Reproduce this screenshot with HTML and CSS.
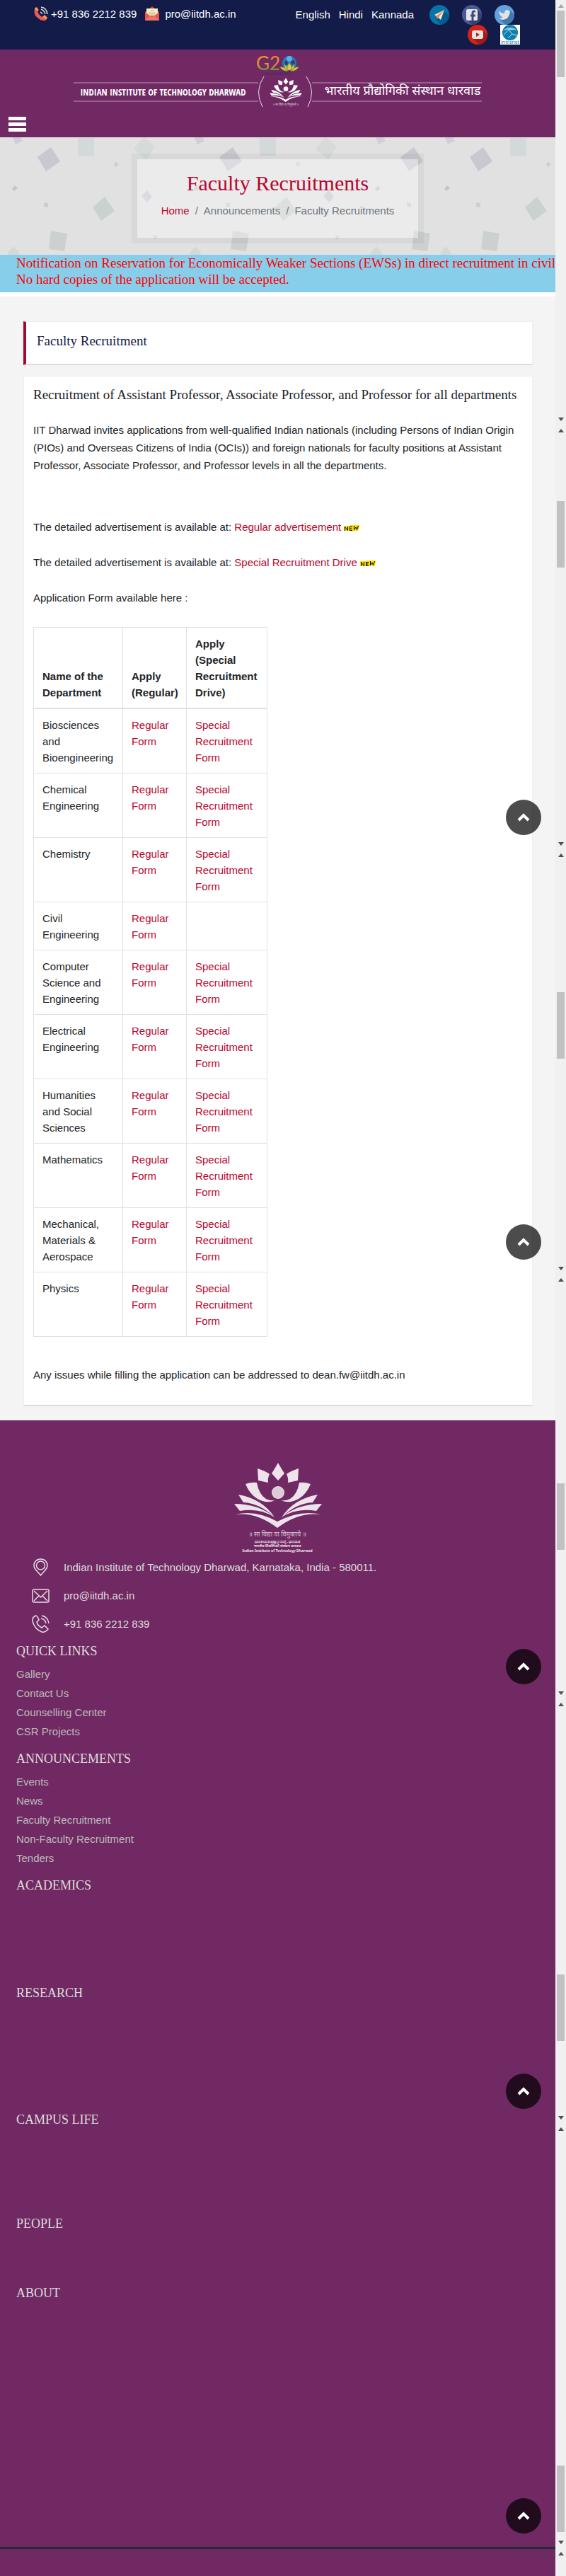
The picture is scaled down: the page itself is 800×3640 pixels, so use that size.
FILE: index.html
```html
<!DOCTYPE html>
<html lang="en">
<head>
<meta charset="utf-8">
<meta name="viewport" content="width=device-width, initial-scale=1">
<title>Faculty Recruitments | IIT Dharwad</title>
<link rel="stylesheet" href="styles.css">
</head>
<body>
<svg class="defs" aria-hidden="true">
  <defs>
    <symbol id="lotus" viewBox="0 0 124 92">
      <path d="M62 0Q67 9 71 15L62 25L53 15Q57 9 62 0Z"/>
      <path d="M33 8Q43 11 50 16Q47 22 48 28L34 25Z"/>
      <path d="M91 8Q81 11 74 16Q77 22 76 28L90 25Z"/>
      <path d="M16 30Q24 27 32 28Q35 45 45 51Q51 54 58 53Q49 57 40 54Q24 49 16 30Z"/>
      <path d="M108 30Q100 27 92 28Q89 45 79 51Q73 54 66 53Q75 57 84 54Q100 49 108 30Z"/>
      <path d="M6 45Q40 51 57 77Q36 57 13 56Z"/>
      <path d="M118 45Q84 51 67 77Q88 57 111 56Z"/>
      <path d="M0 58Q35 58 57 77Q36 63 8 68Z"/>
      <path d="M124 58Q89 58 67 77Q88 63 116 68Z"/>
      <path d="M2 73Q30 66 61 83Q94 66 122 73Q91 69 61 92Q31 69 2 73Z"/>
      <circle cx="62" cy="42" r="9"/>
    </symbol>
    <symbol id="chevron" viewBox="0 0 18 12"><path d="M2 10L9 3L16 10" fill="none" stroke="#fff" stroke-width="4"/></symbol>
    <symbol id="new" viewBox="0 0 22 9">
      <path d="M0 1H9V0H22V3L20 8H0Z" fill="#fd0"/>
      <path d="M1.500 8V2.500L5.500 7.500V2M12 2.500H8.500V7.500H12M8.500 5H11.500M14.500 1V6.500L17 3L18.500 6.500L20.500 1" fill="none" stroke="#000" stroke-width="1"/>
    </symbol>
  </defs>
</svg>
<div class="page">
  <div class="site">
    <div class="topbar">
      <div class="contact">
        <svg width="20" height="20" viewBox="0 0 20 20" aria-hidden="true">
          <path d="M1 3Q-1 12 5 16Q10 21 16 20L19 17L15 13L12 15Q7 13 5 7L7 5L4 1Z" fill="#e9595a"/>
          <path d="M1 3L3 1L6 5L5 7Z M12 15L15 12L19 16L17 18Z" fill="#f5a34c"/>
          <path d="M9 8Q11 9 12 11M10 4Q15 6 16 11M10 1Q18 2 19 11" fill="none" stroke="#d7dbe0" stroke-width="1.5"/>
        </svg>
        <span>+91 836 2212 839</span>
        <svg class="mail" width="20" height="20" viewBox="0 0 20 20" aria-hidden="true">
          <path d="M0 8L10 0L20 8V20H0Z" fill="#c9484b"/><path d="M2 3H18V13H2Z" fill="#f2ecc0"/>
          <path d="M0 8L8 14L0 20Z M20 8L12 14L20 20Z" fill="#e7564f"/><path d="M0 20L7 13Q10 16 13 13L20 20Z" fill="#ef7466"/>
          <path d="M8 6H12M5 9H15M6 11H14" stroke="#c9b98c"/>
        </svg>
        <span>pro@iitdh.ac.in</span>
      </div>
      <nav class="langs" aria-label="Language"><a href="#">English</a><a href="#">Hindi</a><a href="#">Kannada</a></nav>
      <div class="social">
        <div class="social-row first">
          <a href="#" aria-label="Telegram"><svg viewBox="0 0 28 28"><circle cx="14" cy="14" r="14" fill="#0674a6"/><path d="M20 8L28 15A14 14 0 0 1 16 28L9 20Z" fill="#045c8e"/><path d="M21 7L7 14L11 16L16 21Z" fill="#e9edf0"/><path d="M21 7L9 16L12 20L14 16Z" fill="#f08a3c"/></svg></a>
          <a href="#" aria-label="Facebook"><svg viewBox="0 0 28 28"><circle cx="14" cy="14" r="14" fill="#4c5a94"/><path d="M22 7L28 13A14 14 0 0 1 15 28L7 21Z" fill="#36416f"/><rect x="6" y="6" width="16" height="16" rx="2" fill="#e6e6e8"/><path d="M15 22V11Q15 9 17 9H19M12 15H19" fill="none" stroke="#3c4a80" stroke-width="3"/></svg></a>
          <a href="#" aria-label="Twitter"><svg viewBox="0 0 28 28"><circle cx="14" cy="14" r="14" fill="#64a1dc"/><path d="M22 8L28 14A14 14 0 0 1 15 28L7 20Z" fill="#3f7bab"/><path d="M6 8Q9 12 14 12Q14 7 18 7L22 9Q21 20 12 21Q9 21 6 19Q10 19 11 17Q8 16 8 14Q6 12 6 8Z" fill="#e3e3e5"/></svg></a>
        </div>
        <div class="social-row">
          <a href="#" aria-label="YouTube"><svg viewBox="0 0 28 28"><circle cx="14" cy="14" r="14" fill="#d42319"/><path d="M22 9L28 15A14 14 0 0 1 17 28L7 19Z" fill="#a51713"/><rect x="6" y="8" width="16" height="12" rx="3" fill="#e3e3e3"/><path d="M12 11L17 14L12 17Z" fill="#b5201c"/></svg></a>
          <a href="#" aria-label="Intranet"><svg viewBox="0 0 28 28"><path d="M0 0H28V28H0Z" fill="#fff"/><circle cx="14" cy="11" r="11" fill="#0e7fb0"/><path d="M4 8Q14 0 24 8Q14 5 4 8Z" fill="#8cc8e2"/><path d="M5 14L12 7L17 13L24 15M12 7L20 6M17 13L11 19" fill="none" stroke="#bfe0ee"/><text x="14" y="27" text-anchor="middle" class="intranet">Intranet</text></svg></a>
        </div>
      </div>
    </div>

    <header class="header">
      <svg class="g20" viewBox="0 0 60 30" role="img" aria-label="G20">
        <defs><linearGradient id="tri" x1="0" y1="0" x2="0" y2="1"><stop offset="0.3" stop-color="#f58a2c"/><stop offset="0.65" stop-color="#c99a35"/><stop offset="0.9" stop-color="#2c8a45"/></linearGradient></defs>
        <text x="-1" y="21" class="g20-text" fill="url(#tri)">G2</text>
        <circle cx="46" cy="11" r="10" fill="#1583c2"/><circle cx="46" cy="5" r="4" fill="#57b4e0"/>
        <path d="M39 9L43 7L44 13L40 14ZM48 8L53 7L54 12L49 14Z" fill="#54306a"/>
        <path d="M46 11Q50 15 49 21H43Q42 15 46 11ZM39 13Q43 16 44 22Q39 21 39 13ZM53 13Q49 16 48 22Q53 21 53 13ZM33 17Q38 16 44 22Q37 23 33 17ZM59 17Q54 16 48 22Q55 23 59 17Z" fill="#e6c542" stroke="#6d9b3a" stroke-width=".6"/>
        <text x="31" y="28" text-anchor="middle" class="g20-sub">भारत 2023 INDIA</text>
      </svg>
      <div class="brand">
        <span class="brand-en">INDIAN INSTITUTE OF TECHNOLOGY DHARWAD</span>
        <svg class="brand-mark" viewBox="0 0 76 43" role="img" aria-label="IIT Dharwad emblem">
          <path d="M8 0Q-6 21 6 43M68 0Q82 21 70 43" fill="none" stroke="#eadfe8"/>
          <use href="#lotus" x="16" y="1" width="46" height="36" fill="#fff"/>
          <text x="39" y="41" text-anchor="middle" class="motto-small">॥ सा विद्या या विमुक्तये ॥</text>
        </svg>
        <span class="brand-hi" lang="hi">भारतीय प्रौद्योगिकी संस्थान धारवाड</span>
      </div>
      <button class="menu" type="button" aria-label="Menu"><i></i><i></i><i></i></button>
    </header>

    <section class="banner">
      <svg class="confetti" aria-hidden="true">
        <defs>
          <g id="bits">
            <path d="M18 0H29L32 5L22 10Z" fill="#cfcfd8"/><path d="M110 1H133V26H110Z" fill="#d3d8d8"/>
            <path d="M203 -1L219 13L207 32L189 17Z" fill="#d6dad8"/><path d="M72 14L85 34L65 48L53 28Z" fill="#c8c9cf"/>
            <path d="M163 34L168 38L164 42L161 39Z" fill="#cdcdd8"/><path d="M21 68L25 72L20 76L17 73Z" fill="#c5c6c9"/>
            <path d="M62 92L68 93V99L62 98Z" fill="#cbcecd"/><path d="M148 84L162 104L143 118L131 99Z" fill="#cad2cf"/>
            <path d="M208 75L215 84L208 92L200 83Z" fill="#c6c7d2"/><path d="M72 132L95 136L91 161L69 158Z" fill="#ccd0ce"/>
            <path d="M19 154L27 163L26 166H12L11 163Z" fill="#d3d9d8"/><path d="M219 138L223 141L219 144L216 141Z" fill="#cfcfd2"/>
          </g>
          <pattern id="confetti" width="611" height="166" patternUnits="userSpaceOnUse"><use href="#bits"/><use href="#bits" x="257"/><use href="#bits" x="513"/></pattern>
        </defs>
        <rect width="100%" height="100%" fill="url(#confetti)"/>
      </svg>
      <div class="banner-box">
        <h1>Faculty Recruitments</h1>
        <nav class="crumbs" aria-label="Breadcrumb"><a href="#">Home</a><span>/</span><span>Announcements</span><span>/</span><span>Faculty Recruitments</span></nav>
      </div>
    </section>

    <div class="notice">
      <p>Notification on Reservation for Economically Weaker Sections (EWSs) in direct recruitment in civil posts</p>
      <p>No hard copies of the application will be accepted.</p>
    </div>

    <main class="content">
      <div class="card card-title"><h2>Faculty Recruitment</h2></div>
      <div class="card card-body">
        <h3>Recruitment of Assistant Professor, Associate Professor, and Professor for all departments</h3>
        <p class="intro">IIT Dharwad invites applications from well-qualified Indian nationals (including Persons of Indian Origin (PIOs) and Overseas Citizens of India (OCIs)) and foreign nationals for faculty positions at Assistant Professor, Associate Professor, and Professor levels in all the departments.</p>
        <p>The detailed advertisement is available at: <a href="#">Regular advertisement</a><svg class="new" role="img" aria-label="New"><use href="#new"/></svg></p>
        <p>The detailed advertisement is available at: <a href="#">Special Recruitment Drive</a><svg class="new" role="img" aria-label="New"><use href="#new"/></svg></p>
        <p>Application Form available here :</p>
        <table>
          <colgroup><col class="c-name"><col class="c-reg"><col class="c-spec"></colgroup>
          <thead><tr><th>Name of the Department</th><th>Apply (Regular)</th><th>Apply (Special Recruitment Drive)</th></tr></thead>
          <tbody>
            <tr><td>Biosciences and Bioengineering</td><td><a href="#">Regular Form</a></td><td><a href="#">Special Recruitment Form</a></td></tr>
            <tr><td>Chemical Engineering</td><td><a href="#">Regular Form</a></td><td><a href="#">Special Recruitment Form</a></td></tr>
            <tr><td>Chemistry</td><td><a href="#">Regular Form</a></td><td><a href="#">Special Recruitment Form</a></td></tr>
            <tr><td>Civil Engineering</td><td><a href="#">Regular Form</a></td><td></td></tr>
            <tr><td>Computer Science and Engineering</td><td><a href="#">Regular Form</a></td><td><a href="#">Special Recruitment Form</a></td></tr>
            <tr><td>Electrical Engineering</td><td><a href="#">Regular Form</a></td><td><a href="#">Special Recruitment Form</a></td></tr>
            <tr><td>Humanities and Social Sciences</td><td><a href="#">Regular Form</a></td><td><a href="#">Special Recruitment Form</a></td></tr>
            <tr><td>Mathematics</td><td><a href="#">Regular Form</a></td><td><a href="#">Special Recruitment Form</a></td></tr>
            <tr><td>Mechanical, Materials &amp; Aerospace</td><td><a href="#">Regular Form</a></td><td><a href="#">Special Recruitment Form</a></td></tr>
            <tr><td>Physics</td><td><a href="#">Regular Form</a></td><td><a href="#">Special Recruitment Form</a></td></tr>
          </tbody>
        </table>
        <p class="issues">Any issues while filling the application can be addressed to dean.fw@iitdh.ac.in</p>
      </div>
    </main>

    <footer class="footer">
      <svg class="footer-logo" viewBox="0 0 126 130" role="img" aria-label="Indian Institute of Technology Dharwad">
        <use href="#lotus" x="1" y="0" width="124" height="92" fill="#ede3eb"/>
        <circle cx="63" cy="42" r="8" fill="#dccbd9"/>
        <text x="62" y="104" text-anchor="middle" class="motto">॥ सा विद्या या विमुक्तये ॥</text>
        <text x="62" y="113" text-anchor="middle" class="name-small">ಭಾರತೀಯ ತಂತ್ರಜ್ಞಾನ ಸಂಸ್ಥೆ, ಧಾರವಾಡ</text>
        <text x="62" y="119" text-anchor="middle" class="name-small">भारतीय प्रौद्योगिकी संस्थान धारवाड</text>
        <text x="62" y="126" text-anchor="middle" class="name-small">Indian Institute of Technology Dharwad</text>
      </svg>
      <ul class="reach">
        <li><svg viewBox="0 0 25 25" aria-hidden="true"><path d="M12.500 1C6 1 3 6 3 10C3 16 9 19 12.500 24C16 19 22 16 22 10C22 6 19 1 12.500 1Z"/><circle cx="12.500" cy="10" r="6"/></svg><span>Indian Institute of Technology Dharwad, Karnataka, India - 580011.</span></li>
        <li><svg viewBox="0 0 25 25" aria-hidden="true"><rect x="1" y="4" width="23" height="18" rx="2"/><path d="M3 6L12.500 15L22 6M3 20L10 13M22 20L15 13"/></svg><span>pro@iitdh.ac.in</span></li>
        <li><svg viewBox="0 0 25 25" aria-hidden="true"><path d="M5 1Q0 4 1 9Q4 20 14 24Q19 25 23 20L18 15L14 18Q8 15 7 10L10 7Q8 1 5 1ZM13 5Q19 6 20 12M14 1Q23 3 24 12"/></svg><span>+91 836 2212 839</span></li>
      </ul>
      <section class="group"><h4>QUICK LINKS</h4><ul><li><a href="#">Gallery</a></li><li><a href="#">Contact Us</a></li><li><a href="#">Counselling Center</a></li><li><a href="#">CSR Projects</a></li></ul></section>
      <section class="group"><h4>ANNOUNCEMENTS</h4><ul><li><a href="#">Events</a></li><li><a href="#">News</a></li><li><a href="#">Faculty Recruitment</a></li><li><a href="#">Non-Faculty Recruitment</a></li><li><a href="#">Tenders</a></li></ul></section>
      <section class="group academics"><h4>ACADEMICS</h4></section>
      <section class="group research"><h4>RESEARCH</h4></section>
      <section class="group campus"><h4>CAMPUS LIFE</h4></section>
      <section class="group people"><h4>PEOPLE</h4></section>
      <section class="group about"><h4>ABOUT</h4></section>
      <div class="footer-end"></div>
    </footer>
  </div>

  <aside class="rail">
    <div class="tile top"><i class="up"></i><b class="thumb t0"></b><i class="down"></i></div>
    <div class="tile"><i class="up"></i><b class="thumb t1"></b><i class="down"></i><button class="to-top" type="button" aria-label="Back to top"><svg width="18" height="12"><use href="#chevron"/></svg></button></div>
    <div class="tile"><i class="up"></i><b class="thumb t2"></b><i class="down"></i><button class="to-top" type="button" aria-label="Back to top"><svg width="18" height="12"><use href="#chevron"/></svg></button></div>
    <div class="tile"><i class="up"></i><b class="thumb t3"></b><i class="down"></i><button class="to-top" type="button" aria-label="Back to top"><svg width="18" height="12"><use href="#chevron"/></svg></button></div>
    <div class="tile"><i class="up"></i><b class="thumb t4"></b><i class="down"></i><button class="to-top" type="button" aria-label="Back to top"><svg width="18" height="12"><use href="#chevron"/></svg></button></div>
    <div class="tile"><i class="up"></i><b class="thumb t5"></b><i class="down"></i><button class="to-top" type="button" aria-label="Back to top"><svg width="18" height="12"><use href="#chevron"/></svg></button></div>
    <div class="tile rest"><i class="up"></i></div>
  </aside>
</div>
</body>
</html>
```
FILE: styles.css
```css
* { box-sizing: border-box; }
body { margin: 0; background: #fff; color: #212529; font: 15px/25px "Liberation Sans", Arial, sans-serif; }
h1, h2, h3, h4, p, ul { margin: 0; padding: 0; font-weight: 400; }
h1, h2, h3, h4 { font-family: "Liberation Serif", "Times New Roman", serif; }
ul { list-style: none; }
a { color: #b8062e; text-decoration: none; }
button { border: 0; padding: 0; }
svg { display: block; }
.defs { position: absolute; width: 0; height: 0; }
.page { display: flex; }
.site { flex: 1; min-width: 0; }

.topbar { display: flex; min-height: 70px; background: #131b49; color: #fff; }
.contact { display: flex; align-items: center; gap: 4px; height: 24px; margin: 7px 0 0 48px; }
.contact .mail { margin: 0 4px 0 8px; }
.langs { display: flex; gap: 12px; margin: 8px 0 0 auto; }
.langs a { color: #fff; }
.social { display: flex; flex-direction: column; align-items: flex-end; padding: 7px 50px 0 22px; }
.social-row { display: flex; gap: 18px; }
.social-row.first { padding-right: 8px; }
.social-row svg { width: 28px; height: 28px; }
.intranet { font: 7px "Open Sans", sans-serif; fill: #16789f; }

.header { display: flex; flex-direction: column; padding: 8px 0; background: #712963; }
.g20 { width: 60px; height: 30px; align-self: center; overflow: visible; }
.g20-text { font: 26px Lato, sans-serif; }
.g20-sub { font: 5px "Noto Sans", sans-serif; fill: #39267a; }
.brand { display: flex; align-items: center; align-self: center; height: 43px; color: #fff; }
.brand-en, .brand-hi { display: flex; align-items: center; justify-content: center; height: 28px; border: solid #94608a; border-width: 2px 0; white-space: nowrap; }
.brand-en { width: 261px; padding-right: 8px; font: bold 13px "Liberation Sans Narrow", "Open Sans Condensed", "Liberation Sans", sans-serif; }
.brand-hi { width: 240px; padding-left: 16px; font: 18px "Noto Sans Devanagari", "Noto Sans", sans-serif; }
.brand-mark { width: 76px; height: 43px; }
.motto-small { font: 4px "Noto Sans", sans-serif; fill: #e0d2dd; }
.menu { display: flex; flex-direction: column; gap: 3px; width: 25px; margin: 14px 0 0 12px; background: none; }
.menu i { height: 5px; background: #fff; }

.banner { position: relative; display: flex; justify-content: center; padding: 23px 0 16px; background: #e1e1e1; }
.confetti { position: absolute; inset: 0; width: 100%; height: 100%; }
.banner-box { position: relative; padding: 16px 34px 26px; border: 8px solid rgba(0, 0, 0, .04); background: rgba(255, 255, 255, .35); background-clip: padding-box; text-align: center; }
.banner-box h1 { margin-bottom: 8px; color: #b8062e; font-size: 30px; line-height: 36px; }
.crumbs { display: flex; justify-content: center; gap: 8px; color: #6c757d; }

.notice { overflow: hidden; padding: 0 0 7px 23px; border-bottom: 6px solid #fff; background: #87ceeb; color: #f00; font: 19px/23px "Liberation Serif", "Times New Roman", serif; white-space: nowrap; }

.content { padding: 35px 32px 20px 33px; background: #f4f4f4; }
.card { border: 1px solid #eee; border-bottom: 2px solid #dcdcdc; background: #fff; }
.card-title { margin-bottom: 15px; padding: 15px 15px 21px; border-left: 4px solid #a3092c; color: #131b49; }
.card h2, .card h3 { font-size: 19px; line-height: 23px; }
.card-body { padding: 14px 14px 30px 13px; }
.card h3 { margin-bottom: 26px; }
.card p { margin-bottom: 25px; }
.card .intro { margin-bottom: 62px; }
.card .issues { margin-bottom: 0; }
.new { display: inline-block; width: 22px; height: 9px; margin-left: 4px; vertical-align: -1px; }
table { margin: 29px 0 41px; border-collapse: collapse; table-layout: fixed; width: 330px; line-height: 23px; }
.c-name { width: 126px; }
.c-reg { width: 90px; }
.c-spec { width: 114px; }
th, td { padding: 11px 10px 10px 12px; border: 1px solid #dee2e6; text-align: left; vertical-align: top; }
th { border-bottom-width: 2px; vertical-align: bottom; }

.footer { padding-top: 60px; background: #712963; color: #ddd; }
.footer-logo { width: 126px; height: 130px; margin: 0 auto; }
.motto { font: 9px "Noto Sans Devanagari", "Noto Sans", sans-serif; fill: #d5c2d1; }
.name-small { font: bold 5px "Noto Sans", sans-serif; fill: #ede3eb; }
.reach { padding: 5px 45px 0; }
.reach li { display: flex; gap: 20px; min-height: 40px; }
.reach svg { width: 25px; height: 25px; fill: none; stroke: #e6dce4; stroke-width: 1.5; }
.group { padding: 0 23px; }
.group h4 { padding-bottom: 8px; color: #ddd; font-size: 18px; line-height: 22px; }
.group ul { padding-bottom: 14px; }
.group li { line-height: 27px; }
.group a { color: #bbb; }
.academics { min-height: 152px; }
.research { min-height: 179px; }
.campus { min-height: 147px; }
.people { min-height: 98px; }
.about { min-height: 370px; }
.footer-end { height: 42px; border-top: 3px solid #202d3d; }

.rail { display: flex; flex-direction: column; width: 15px; background: #f0f0f0; }
.tile { position: relative; display: flex; flex-direction: column; align-items: center; height: 600px; padding: 6px 0 5px; }
.tile.rest { height: auto; }
.up, .down { border: 4px solid transparent; }
.up { height: 4px; border-top: 0; border-bottom: 5px solid #505050; }
.top .up { border-bottom-color: #a3a3a3; }
.down { margin-top: auto; border-bottom: 0; border-top: 5px solid #505050; }
.thumb { width: 11px; height: 94px; background: #c1c1c1; }
.t0 { margin-top: 4px; }
.t1 { margin-top: 97px; }
.t2 { margin-top: 191px; }
.t3 { margin-top: 285px; }
.t4 { margin-top: 379px; }
.t5 { margin-top: 473px; }
.to-top { position: absolute; right: 35px; bottom: 20px; display: flex; align-items: center; justify-content: center; width: 50px; height: 50px; border-radius: 50%; background: rgba(0, 0, 0, .7); }
```
